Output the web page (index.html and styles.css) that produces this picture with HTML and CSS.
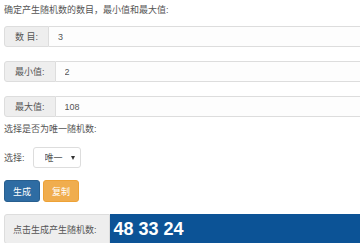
FILE: index.html
```html
<!DOCTYPE html>
<html lang="zh-CN">

<head>
    <meta charset="UTF-8">
    <meta name="viewport" content="width=device-width, initial-scale=1.0">
    <title>随机数</title>
    <link rel="stylesheet" href="styles.css">
</head>

<body>
    <div class="main">
        <p class="tip">确定产生随机数的数目，最小值和最大值:</p>

        <div class="group">
            <span class="addon">数 目:</span>
            <input type="text" class="field" value="3">
        </div>

        <div class="group">
            <span class="addon">最小值:</span>
            <input type="text" class="field" value="2">
        </div>

        <div class="group">
            <span class="addon">最大值:</span>
            <input type="text" class="field" value="108">
        </div>

        <p class="tip">选择是否为唯一随机数:</p>

        <div class="pick">
            <span>选择:</span>
            <span class="sel">
                <select>
                    <option>唯一</option>
                    <option>不唯一</option>
                </select>
            </span>
        </div>

        <div class="btns">
            <button class="btn blue">生成</button>
            <button class="btn orange">复制</button>
        </div>

        <div class="result">
            <span class="addon big">点击生成产生随机数:</span>
            <span class="nums">48 33 24</span>
        </div>
    </div>
</body>

</html>
```

FILE: styles.css
```css
html, body {
    margin: 0;
    overflow: hidden;
}

body {
    font-family: "Liberation Sans", "Noto Sans CJK SC", sans-serif;
    font-size: 9px;
    color: #555;
    background-color: #fff;
}

.main {
    display: flex;
    flex-direction: column;
    padding: 5px 0 0 4px;
}

.tip {
    margin: 0;
    line-height: 11px;
}

.group {
    display: flex;
    height: 21px;
    margin-top: 14px;
}

.tip + .group {
    margin-top: 10px;
}

.addon {
    display: flex;
    align-items: center;
    padding: 0 10px;
    background-color: #eee;
    border: 1px solid #ddd;
    border-radius: 3px 0 0 3px;
    white-space: nowrap;
}

.field {
    flex: 1;
    min-width: 0;
    border: 1px solid #ddd;
    border-left: none;
    border-right: none;
    padding: 0 9px;
    font-family: "Liberation Sans", "Noto Sans CJK SC", sans-serif;
    font-size: 9px;
    color: #555;
    background-color: #fdfdfd;
    outline: none;
}

.group + .tip {
    margin-top: 7px;
}

.pick {
    display: flex;
    align-items: center;
    gap: 8px;
    margin-top: 12px;
}

.sel {
    position: relative;
    display: inline-block;
}

.sel select {
    appearance: none;
    -webkit-appearance: none;
    width: 48px;
    height: 21px;
    padding: 0 0 0 11px;
    border: 1px solid #ddd;
    border-radius: 3px;
    background-color: #fff;
    font-family: "Liberation Sans", "Noto Sans CJK SC", sans-serif;
    font-size: 9px;
    color: #555;
}

.sel::after {
    content: "";
    position: absolute;
    right: 6px;
    top: 9px;
    border-left: 2px solid transparent;
    border-right: 2px solid transparent;
    border-top: 4px solid #333;
}

.btns {
    display: flex;
    gap: 3px;
    margin-top: 12px;
}

.btn {
    height: 22px;
    padding: 0 8px;
    border-radius: 3px;
    font-family: "Liberation Sans", "Noto Sans CJK SC", sans-serif;
    font-size: 9px;
    color: #fff;
}

.blue {
    background-color: #2e6ca3;
    border: 1px solid #285f8f;
}

.orange {
    background-color: #f0ad4e;
    border: 1px solid #eea236;
}

.result {
    display: flex;
    height: 30px;
    margin-top: 12px;
}

.big {
    padding: 0 12px 0 8px;
}

.nums {
    flex: 1;
    display: flex;
    align-items: center;
    padding-left: 4px;
    background-color: #0c5396;
    color: #fff;
    font-size: 18px;
    font-weight: bold;
}
```
